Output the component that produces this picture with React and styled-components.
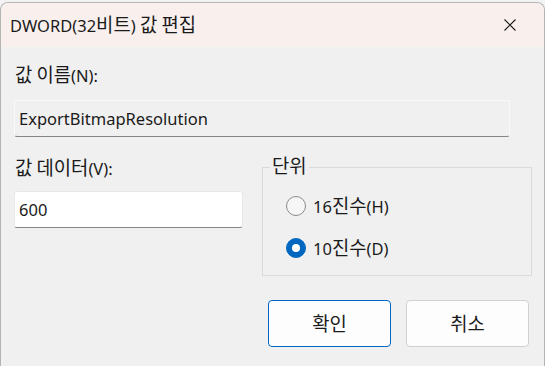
import React from "react";
import styled, { createGlobalStyle } from "styled-components";

const Global = createGlobalStyle`
  html, body { margin: 0; padding: 0; background: #f3f3f3; }
  body { font-family: "Noto Sans", "Noto Sans CJK KR", sans-serif; color: #1a1a1a; }
  * { box-sizing: border-box; }
`;

const Ko = styled.span`
  font-family: "Noto Sans CJK KR", sans-serif;
  font-size: 1.14em;
  line-height: 1;
`;

const Window = styled.div`
  width: 545px;
  height: 366px;
  margin-top: 2px;
  border: 1px solid #b4b4b4;
  border-bottom: none;
  border-radius: 8px 8px 0 0;
  background: #f0f0f0;
  overflow: hidden;
  display: flex;
  flex-direction: column;
`;

const TitleBar = styled.div`
  height: 44px;
  flex: none;
  background: #f9f0ee;
  display: flex;
  align-items: center;
  justify-content: space-between;
  padding: 0 27px 0 9px;
  font-size: 16.5px;
`;

const CloseIcon = styled.svg`
  width: 14px;
  height: 14px;
`;

const Body = styled.div`
  padding: 17px 13px 0 13px;
  display: flex;
  flex-direction: column;
`;

const Label = styled.div`
  font-size: 16.5px;
  line-height: 24px;
  height: 24px;
  padding-left: 1px;
`;

const TextBox = styled.div`
  height: 37px;
  margin-top: ${(p) => p.$top}px;
  width: ${(p) => p.$width}px;
  background: ${(p) => (p.$readOnly ? "#f0f0f0" : "#ffffff")};
  border: 1px solid ${(p) => (p.$readOnly ? "#f9f9f9" : "#e8e8e8")};
  border-bottom: 1px solid #868686;
  border-radius: 3px;
  display: flex;
  align-items: center;
  padding-left: 4px;
  font-size: 16.5px;
`;

const Lower = styled.div`
  display: grid;
  grid-template-columns: 229px 270px;
  column-gap: 19px;
  align-items: start;
  margin-top: 20px;
`;

const LeftCol = styled.div`
  display: flex;
  flex-direction: column;
`;

const Group = styled.fieldset`
  margin: -1px 0 0 0;
  border: 1px solid #dadada;
  padding: 2px 0 0 23px;
  height: 120px;
  display: flex;
  flex-direction: column;
  gap: 22px;
`;

const Legend = styled.legend`
  font-size: 16.5px;
  padding: 0 2px;
  margin-left: -16px;
  line-height: 22px;
  height: 22px;
`;

const RadioRow = styled.div`
  display: flex;
  align-items: center;
  gap: 7px;
  font-size: 16.5px;
  height: 20px;
  margin-top: ${(p) => p.$top || 0}px;
`;

const RadioCircle = styled.span`
  width: 20px;
  height: 20px;
  border-radius: 50%;
  flex: none;
  display: flex;
  align-items: center;
  justify-content: center;
  background: ${(p) => (p.$checked ? "#0067c0" : "#f6f6f6")};
  border: 1px solid ${(p) => (p.$checked ? "#0067c0" : "#8a8a8a")};
  &::after {
    content: "";
    display: ${(p) => (p.$checked ? "block" : "none")};
    width: 8px;
    height: 8px;
    border-radius: 50%;
    background: #fff;
  }
`;

const Buttons = styled.div`
  display: flex;
  justify-content: flex-end;
  gap: 15px;
  margin-top: 24px;
  padding-right: 2px;
`;

const Button = styled.div`
  width: 123px;
  height: 47px;
  border-radius: 4px;
  background: #fdfdfd;
  border: 1px solid ${(p) => (p.$primary ? "#0067c0" : "#d0d0d0")};
  display: flex;
  align-items: center;
  justify-content: center;
  font-size: 16.5px;
`;

export default function App() {
  return (
    <>
      <Global />
      <Window>
        <TitleBar>
          <span>DWORD(32<Ko>비트</Ko>) <Ko>값 편집</Ko></span>
          <CloseIcon viewBox="0 0 14 14">
            <path d="M1.5 1.5 L12.5 12.5 M12.5 1.5 L1.5 12.5" stroke="#1a1a1a" strokeWidth="1.1" fill="none" />
          </CloseIcon>
        </TitleBar>
        <Body>
          <Label><Ko>값 이름</Ko>(N):</Label>
          <TextBox $top={12} $width={496} $readOnly>ExportBitmapResolution</TextBox>
          <Lower>
            <LeftCol>
              <Label><Ko>값 데이터</Ko>(V):</Label>
              <TextBox $top={10} $width={229}>600</TextBox>
            </LeftCol>
            <Group>
              <Legend><Ko>단위</Ko></Legend>
              <RadioRow $top={16}>
                <RadioCircle />
                <span>16<Ko>진수</Ko>(H)</span>
              </RadioRow>
              <RadioRow>
                <RadioCircle $checked />
                <span>10<Ko>진수</Ko>(D)</span>
              </RadioRow>
            </Group>
          </Lower>
          <Buttons>
            <Button $primary><Ko>확인</Ko></Button>
            <Button><Ko>취소</Ko></Button>
          </Buttons>
        </Body>
      </Window>
    </>
  );
}
